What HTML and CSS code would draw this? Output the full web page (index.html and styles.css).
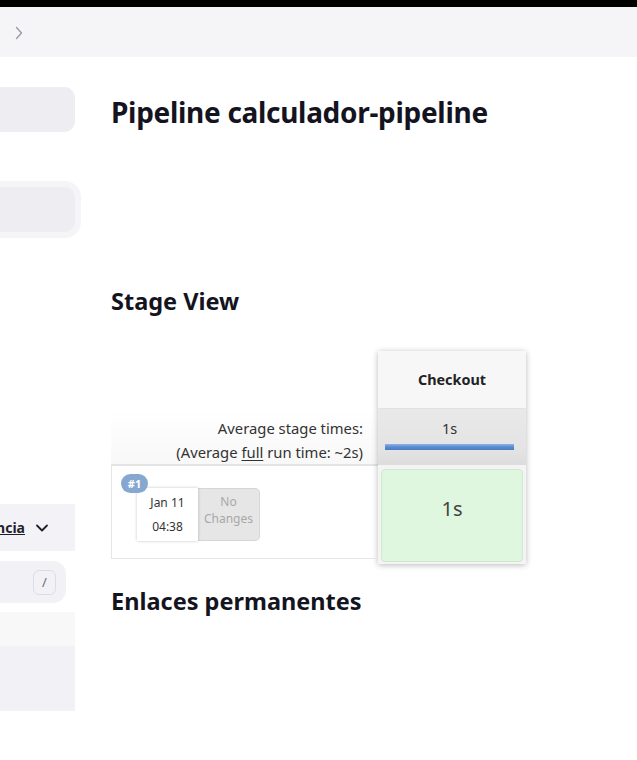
FILE: index.html
```html
<!DOCTYPE html>
<html lang="es">
<head>
<meta charset="utf-8">
<title>calculador-pipeline</title>
<link rel="stylesheet" href="styles.css">
</head>
<body>
<div class="topbar"></div>
<nav class="breadcrumbs">
  <svg class="crumb-chevron" width="10" height="14" viewBox="0 0 10 14"><path d="M2.5 1.5 L7.5 7 L2.5 12.5" fill="none" stroke="#9b9ba8" stroke-width="1.4" stroke-linecap="round" stroke-linejoin="round"/></svg>
</nav>
<div class="page">
  <aside class="sidebar">
    <div class="side-box side-first"></div>
    <div class="side-ring"><div class="side-box"></div></div>
    <div class="side-history">
      <a class="trend-link">Tendencia</a>
      <svg width="14" height="10" viewBox="0 0 14 10"><path d="M2 2.5 L7 7.5 L12 2.5" fill="none" stroke="#1f1f2e" stroke-width="1.8" stroke-linecap="round" stroke-linejoin="round"/></svg>
    </div>
    <div class="side-search"><span class="kbd">/</span></div>
    <div class="side-strip"></div>
    <div class="side-list"></div>
  </aside>
  <main class="main">
    <h1 class="title">Pipeline calculador-pipeline</h1>
    <h2 class="section stage-title">Stage View</h2>
    <div class="stage-view">
      <div class="sv-left">
        <div class="sv-spacer"></div>
        <div class="sv-avg">
          <div>Average stage times:</div>
          <div>(Average <u>full</u> run time: ~2s)</div>
        </div>
        <div class="sv-build">
          <span class="badge">#1</span>
          <div class="build-card">
            <div class="date">
              <div>Jan 11</div>
              <div>04:38</div>
            </div>
            <div class="changes">No<br>Changes</div>
          </div>
        </div>
      </div>
      <div class="sv-col">
        <div class="col-head">Checkout</div>
        <div class="col-avg">
          <div class="avg-time">1s</div>
          <div class="avg-bar"></div>
        </div>
        <div class="col-cell-wrap">
          <div class="col-cell">1s</div>
        </div>
      </div>
    </div>
    <h2 class="section links-title">Enlaces permanentes</h2>
  </main>
</div>
</body>
</html>
```
FILE: styles.css
```css
* { box-sizing: border-box; }
html, body { margin: 0; padding: 0; background: #fff; }
body {
  font-family: "Noto Sans", "Open Sans", "DejaVu Sans", sans-serif;
  color: #14141f;
  width: 637px;
  overflow: hidden;
}
.topbar { height: 7px; background: #000; }
.breadcrumbs {
  height: 50px;
  background: #f5f5f7;
  display: flex;
  align-items: center;
  padding-left: 14px;
}
.crumb-chevron { display: block; margin-top: 1px; }

.page { display: flex; }
.sidebar { width: 81px; flex: none; display: flex; flex-direction: column; }
.side-box {
  width: 75px;
  height: 45px;
  background: #ededf2;
  border-radius: 0 11px 11px 0;
}
.side-first { margin-top: 30px; }
.side-ring {
  margin-top: 49px;
  width: 81px;
  padding: 6px 6px 6px 0;
  background: #f5f5f8;
  border-radius: 0 16px 16px 0;
}
.side-history {
  margin-top: 266px;
  width: 75px;
  height: 47px;
  background: #f2f2f7;
  display: flex;
  align-items: center;
  justify-content: flex-end;
  gap: 10px;
  padding-right: 26px;
  overflow: hidden;
  font-size: 14px;
  font-weight: 700;
}
.trend-link { text-decoration: underline; color: #1f1f2e; white-space: nowrap; }
.side-history svg { flex: none; margin-top: 1px; }
.side-search {
  margin-top: 10px;
  width: 66px;
  height: 42px;
  background: #f2f2f6;
  border-radius: 0 13px 13px 0;
  display: flex;
  align-items: center;
  padding-left: 33px;
}
.kbd {
  width: 23px;
  height: 25px;
  border: 1px solid #dcdce4;
  border-radius: 6px;
  display: flex;
  align-items: center;
  justify-content: center;
  font-size: 13px;
  color: #6b6b7b;
}
.side-strip { margin-top: 9px; width: 75px; height: 34px; background: #f8f8f8; }
.side-list { width: 75px; height: 65px; background: #f2f2f6; }

.main { margin-left: 30px; flex: 1; }
.title {
  margin: 0;
  padding-top: 35px;
  font-size: 28px;
  line-height: 40px;
  font-weight: 700;
  letter-spacing: -0.3px;
}
.section { margin: 0; font-weight: 700; font-size: 23.5px; line-height: 30px; }
.stage-title { margin-top: 154px; }

.stage-view {
  display: flex;
  align-items: flex-start;
  margin-top: 35px;
  color: #333;
  font-family: "Noto Sans", "Open Sans", sans-serif;
}
.sv-left { width: 267px; flex: none; }
.sv-spacer { height: 58px; }
.sv-avg {
  height: 57px;
  text-align: right;
  padding-right: 15px;
  padding-top: 7px;
  font-size: 14.8px;
  line-height: 24px;
  background: linear-gradient(#fff, #f8f8f8);
  border-bottom: 2px solid #e4e4e4;
}
.sv-avg u { text-underline-offset: 2px; }
.sv-build {
  position: relative;
  height: 93px;
  border: 1px solid #e6e6e6;
  border-top: 0;
  border-right: 0;
  padding: 22px 0 0 25px;
}
.badge {
  position: absolute;
  left: 9px;
  top: 8px;
  z-index: 2;
  width: 27px;
  height: 19px;
  border-radius: 10px;
  background: #86a8d0;
  color: #fff;
  font-size: 11px;
  font-weight: 700;
  display: flex;
  align-items: center;
  justify-content: center;
}
.build-card { display: flex; height: 53px; }
.date {
  width: 61px;
  background: #fff;
  box-shadow: 0 0 3px rgba(0,0,0,0.22);
  font-size: 12px;
  line-height: 24px;
  text-align: center;
  padding-top: 3px;
  position: relative;
  z-index: 1;
}
.changes {
  width: 62px;
  background: #e6e6e6;
  border: 1px solid #d6d6d6;
  border-left: 0;
  border-radius: 0 5px 5px 0;
  color: #a8a8a8;
  font-size: 12px;
  line-height: 17px;
  text-align: center;
  padding-top: 4px;
}

.sv-col {
  width: 148px;
  flex: none;
  box-shadow: 0 1px 6px rgba(0,0,0,0.28);
  background: #f2f2f2;
}
.col-head {
  height: 58px;
  background: #f7f7f7;
  display: flex;
  align-items: center;
  justify-content: center;
  font-size: 14.4px;
  font-weight: 700;
  color: #222;
  border-bottom: 1px solid #e2e2e2;
}
.col-avg {
  height: 56px;
  background: linear-gradient(#e9e9e9, #e4e4e4 70%, #dcdcdc);
  padding: 7px 12px 0 7px;
  text-align: center;
  font-size: 14.5px;
  line-height: 24px;
}
.avg-bar {
  margin-top: 4px;
  height: 6px;
  background: linear-gradient(#8fb3e4, #5a8bd2 50%, #4b7cc4);
}
.col-cell-wrap { padding: 4px 3px 2px 3px; background: #f4f4f4; }
.col-cell {
  height: 93px;
  background: #dff7df;
  border: 1px solid #cfe8cf;
  border-radius: 4px;
  text-align: center;
  padding-top: 24px;
  line-height: 30px;
  font-size: 20px;
  color: #444;
}
.links-title { margin-top: 22px; }
```
